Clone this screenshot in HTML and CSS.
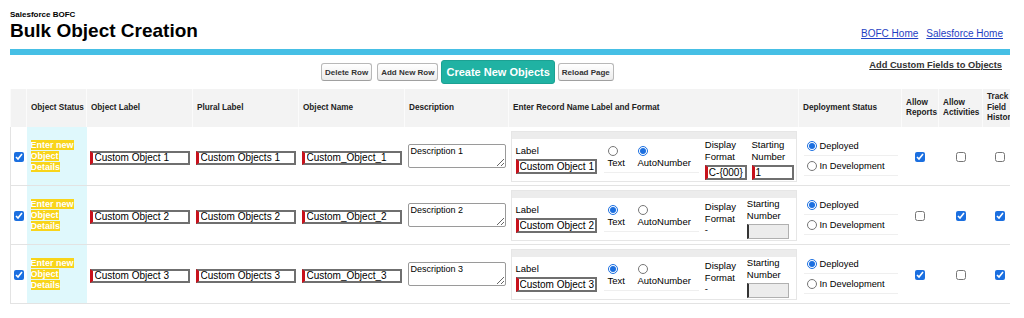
FILE: index.html
```html
<!DOCTYPE html>
<html lang="en">
<head>
    <meta charset="UTF-8">
    <title>Bulk Object Creation</title>
    <link rel="stylesheet" href="styles.css">
</head>
<body>
    <div class="page">
        <header class="top">
            <div class="brand">
                <div class="app-name">Salesforce BOFC</div>
                <h1>Bulk Object Creation</h1>
            </div>
            <nav class="top-links">
                <a href="#">BOFC Home</a>
                <a href="#">Salesforce Home</a>
            </nav>
        </header>
        <div class="bar"></div>

        <div class="toolbar">
            <div></div>
            <div class="buttons">
                <button class="btn">Delete Row</button>
                <button class="btn">Add New Row</button>
                <button class="btn btn-main">Create New Objects</button>
                <button class="btn">Reload Page</button>
            </div>
            <a class="help-link" href="#">Add Custom Fields to Objects</a>
        </div>

        <div class="grid-wrap">
            <table class="grid">
                <colgroup>
                    <col style="width:16px"><col style="width:60px"><col style="width:106px"><col style="width:106px">
                    <col style="width:106px"><col style="width:104px"><col style="width:290px"><col style="width:103px">
                    <col style="width:37px"><col style="width:44px"><col style="width:35px">
                </colgroup>
                <thead>
                    <tr>
                        <th></th>
                        <th>Object Status</th>
                        <th>Object Label</th>
                        <th>Plural Label</th>
                        <th>Object Name</th>
                        <th>Description</th>
                        <th>Enter Record Name Label and Format</th>
                        <th>Deployment Status</th>
                        <th>Allow Reports</th>
                        <th>Allow Activities</th>
                        <th>Track Field History</th>
                    </tr>
                </thead>
                <tbody>
                    <!-- row 1 -->
                    <tr>
                        <td class="c-sel"><input type="checkbox" class="chk" checked></td>
                        <td class="c-status"><span class="status-tag">Enter new Object Details</span></td>
                        <td><input class="fld" value="Custom Object 1"></td>
                        <td><input class="fld" value="Custom Objects 1"></td>
                        <td><input class="fld" value="Custom_Object_1"></td>
                        <td><textarea class="desc">Description 1</textarea></td>
                        <td class="c-rec">
                            <div class="rec">
                                <div class="rec-head"></div>
                                <div class="rec-body">
                                    <div class="rec-label">
                                        <div class="small">Label</div>
                                        <input class="fld fld-rec" value="Custom Object 1">
                                    </div>
                                    <div class="rec-type">
                                        <label class="opt opt-text"><input type="radio" name="t1" class="rad"><span>Text</span></label>
                                        <label class="opt"><input type="radio" name="t1" class="rad" checked><span>AutoNumber</span></label>
                                    </div>
                                    <div class="rec-fmt">
                                        <div class="small two">Display<br>Format</div>
                                        <input class="fld fld-sm" value="C-{000}">
                                    </div>
                                    <div class="rec-start">
                                        <div class="small two">Starting<br>Number</div>
                                        <input class="fld fld-sm" value="1">
                                    </div>
                                </div>
                            </div>
                        </td>
                        <td>
                            <div class="dep">
                                <label class="dep-opt"><input type="radio" name="d1" class="rad" checked>Deployed</label>
                                <label class="dep-opt"><input type="radio" name="d1" class="rad">In Development</label>
                            </div>
                        </td>
                        <td class="c-chk"><input type="checkbox" class="chk" checked></td>
                        <td class="c-chk"><input type="checkbox" class="chk"></td>
                        <td class="c-chk"><input type="checkbox" class="chk"></td>
                    </tr>
                    <!-- row 2 -->
                    <tr>
                        <td class="c-sel"><input type="checkbox" class="chk" checked></td>
                        <td class="c-status"><span class="status-tag">Enter new Object Details</span></td>
                        <td><input class="fld" value="Custom Object 2"></td>
                        <td><input class="fld" value="Custom Objects 2"></td>
                        <td><input class="fld" value="Custom_Object_2"></td>
                        <td><textarea class="desc">Description 2</textarea></td>
                        <td class="c-rec">
                            <div class="rec">
                                <div class="rec-head"></div>
                                <div class="rec-body">
                                    <div class="rec-label">
                                        <div class="small">Label</div>
                                        <input class="fld fld-rec" value="Custom Object 2">
                                    </div>
                                    <div class="rec-type">
                                        <label class="opt opt-text"><input type="radio" name="t2" class="rad" checked><span>Text</span></label>
                                        <label class="opt"><input type="radio" name="t2" class="rad"><span>AutoNumber</span></label>
                                    </div>
                                    <div class="rec-fmt">
                                        <div class="small three">Display<br>Format<br>-</div>
                                    </div>
                                    <div class="rec-start">
                                        <div class="small two">Starting<br>Number</div>
                                        <input class="fld fld-sm fld-off" disabled>
                                    </div>
                                </div>
                            </div>
                        </td>
                        <td>
                            <div class="dep">
                                <label class="dep-opt"><input type="radio" name="d2" class="rad" checked>Deployed</label>
                                <label class="dep-opt"><input type="radio" name="d2" class="rad">In Development</label>
                            </div>
                        </td>
                        <td class="c-chk"><input type="checkbox" class="chk"></td>
                        <td class="c-chk"><input type="checkbox" class="chk" checked></td>
                        <td class="c-chk"><input type="checkbox" class="chk" checked></td>
                    </tr>
                    <!-- row 3 -->
                    <tr>
                        <td class="c-sel"><input type="checkbox" class="chk" checked></td>
                        <td class="c-status"><span class="status-tag">Enter new Object Details</span></td>
                        <td><input class="fld" value="Custom Object 3"></td>
                        <td><input class="fld" value="Custom Objects 3"></td>
                        <td><input class="fld" value="Custom_Object_3"></td>
                        <td><textarea class="desc">Description 3</textarea></td>
                        <td class="c-rec">
                            <div class="rec">
                                <div class="rec-head"></div>
                                <div class="rec-body">
                                    <div class="rec-label">
                                        <div class="small">Label</div>
                                        <input class="fld fld-rec" value="Custom Object 3">
                                    </div>
                                    <div class="rec-type">
                                        <label class="opt opt-text"><input type="radio" name="t3" class="rad" checked><span>Text</span></label>
                                        <label class="opt"><input type="radio" name="t3" class="rad"><span>AutoNumber</span></label>
                                    </div>
                                    <div class="rec-fmt">
                                        <div class="small three">Display<br>Format<br>-</div>
                                    </div>
                                    <div class="rec-start">
                                        <div class="small two">Starting<br>Number</div>
                                        <input class="fld fld-sm fld-off" disabled>
                                    </div>
                                </div>
                            </div>
                        </td>
                        <td>
                            <div class="dep">
                                <label class="dep-opt"><input type="radio" name="d3" class="rad" checked>Deployed</label>
                                <label class="dep-opt"><input type="radio" name="d3" class="rad">In Development</label>
                            </div>
                        </td>
                        <td class="c-chk"><input type="checkbox" class="chk" checked></td>
                        <td class="c-chk"><input type="checkbox" class="chk"></td>
                        <td class="c-chk"><input type="checkbox" class="chk" checked></td>
                    </tr>
                </tbody>
            </table>
        </div>
    </div>
</body>
</html>
```

FILE: styles.css
```css
body, html {
    margin: 0;
    padding: 0;
    background: #fff;
    font-family: 'Liberation Sans', Arial, sans-serif;
    color: #000;
}
.page {
    width: 1000px;
    padding: 10px 14px 0 10px;
}
.top {
    display: flex;
    justify-content: space-between;
    align-items: flex-end;
}
.app-name {
    font-size: 8px;
    font-weight: bold;
    line-height: 10px;
}
.top h1 {
    margin: 0;
    font-size: 19px;
    line-height: 22px;
}
.top-links {
    display: flex;
    gap: 8px;
    margin-right: 7px;
    padding-bottom: 2px;
    font-size: 10px;
    line-height: 12px;
}
.top-links a {
    color: #1f3fc3;
}
.bar {
    height: 6px;
    margin-top: 7px;
    background-color: #46bfe5;
}
.toolbar {
    display: grid;
    grid-template-columns: 311px 1fr auto;
    align-items: start;
    margin-top: 5px;
}
.buttons {
    display: flex;
    align-items: center;
    height: 24px;
}
.btn {
    height: 18px;
    margin: 0 5px 0 0;
    padding: 0 3px;
    font-family: 'Liberation Sans', Arial, sans-serif;
    font-size: 8px;
    font-weight: bold;
    color: #333;
    background: linear-gradient(#ffffff, #ececec);
    border: 1px solid #b8b8b8;
    border-bottom-color: #a0a0a0;
    border-radius: 3px;
}
.btn-main {
    height: 24px;
    margin-right: 3px;
    margin-left: -2px;
    padding: 0 4px;
    font-size: 11px;
    color: #fff;
    background: #20b2a3;
    border: 1px solid #1ca193;
}
.help-link {
    margin-right: 8px;
    font-size: 9.3px;
    font-weight: bold;
    line-height: 11px;
    color: #333;
}
.grid-wrap {
    width: 1000px;
    overflow: hidden;
    margin-top: 5px;
}
.grid {
    width: 1007px;
    table-layout: fixed;
    border-collapse: collapse;
    border-left: 1px solid #e3e3e3;
}
.grid th {
    height: 38px;
    padding: 0 2px 0 4px;
    background-color: #f3f3f3;
    border-left: 1px solid #fbfbfb;
    font-size: 8.2px;
    line-height: 10.5px;
    font-weight: bold;
    color: #222;
    text-align: left;
    vertical-align: middle;
    overflow: hidden;
}
.grid td {
    height: 58px;
    padding: 0 3px;
    border-bottom: 1px solid #e3e3e3;
    vertical-align: middle;
}
.grid td.c-sel {
    padding: 0;
    text-align: center;
}
.grid td.c-status {
    padding: 0 4px;
    font-size: 9px;
    line-height: 11px;
    background-color: #dff8fc;
}
.status-tag {
    font-weight: bold;
    color: #fff;
    background-color: #f8d41a;
}
.chk {
    width: 10px;
    height: 10px;
    margin: 0;
    accent-color: #1b6fe0;
    vertical-align: middle;
}
.rad {
    width: 10px;
    height: 10px;
    margin: 0;
    accent-color: #1b6fe0;
}
.grid td.c-chk {
    padding: 0;
    text-align: center;
}
.fld {
    box-sizing: border-box;
    width: 100px;
    height: 14px;
    margin: 0;
    padding: 0 2px;
    font-family: 'Liberation Sans', Arial, sans-serif;
    font-size: 10px;
    color: #000;
    background: #fff;
    border: 2px solid #6f6f6f;
    border-left: 3px solid #c8121c;
}
.desc {
    box-sizing: border-box;
    display: block;
    width: 98px;
    height: 24px;
    margin: 0;
    padding: 1px 2px;
    font-family: 'Liberation Sans', Arial, sans-serif;
    font-size: 9px;
    border: 1px solid #9a9a9a;
    border-radius: 2px;
}
.grid td.c-rec {
    padding: 0 2px;
}
.rec {
    border: 1px solid #e6e6e6;
}
.rec-head {
    height: 7px;
    background-color: #ececec;
}
.rec-body {
    display: flex;
    align-items: center;
    height: 42px;
    padding: 0 2px 0 4px;
}
.small {
    font-size: 9.5px;
    line-height: 11px;
}
.small.two, .small.three {
    line-height: 11.5px;
}
.fld-rec {
    width: 81px;
    height: 15px;
    padding: 0 0 0 1px;
}
.rec-type {
    display: flex;
    margin-left: 7px;
    padding-bottom: 4px;
    border-bottom: 1px solid #efefef;
}
.opt {
    display: flex;
    flex-direction: column;
    align-items: flex-start;
    padding: 0 4px;
    font-size: 9.5px;
    line-height: 11px;
    gap: 1px;
}
.opt-text {
    width: 22px;
}
.opt:last-child {
    padding-right: 8px;
}
.rec-fmt {
    min-width: 37px;
    margin-left: 6px;
}
.rec-start {
    margin-left: 5px;
}
.fld-sm {
    width: 42px;
    height: 15px;
    margin-top: 1px;
    padding: 0 0 0 1px;
}
.fld-off {
    background: #ececec;
    border: 1px solid #b0b0b0;
    border-left: 2px solid #333;
}
.dep {
    margin: 0 0 0 2px;
    width: 94px;
}
.dep-opt {
    display: flex;
    align-items: center;
    gap: 3px;
    height: 19px;
    padding-left: 3px;
    font-size: 9.3px;
    border-bottom: 1px solid #efefef;
}
```
